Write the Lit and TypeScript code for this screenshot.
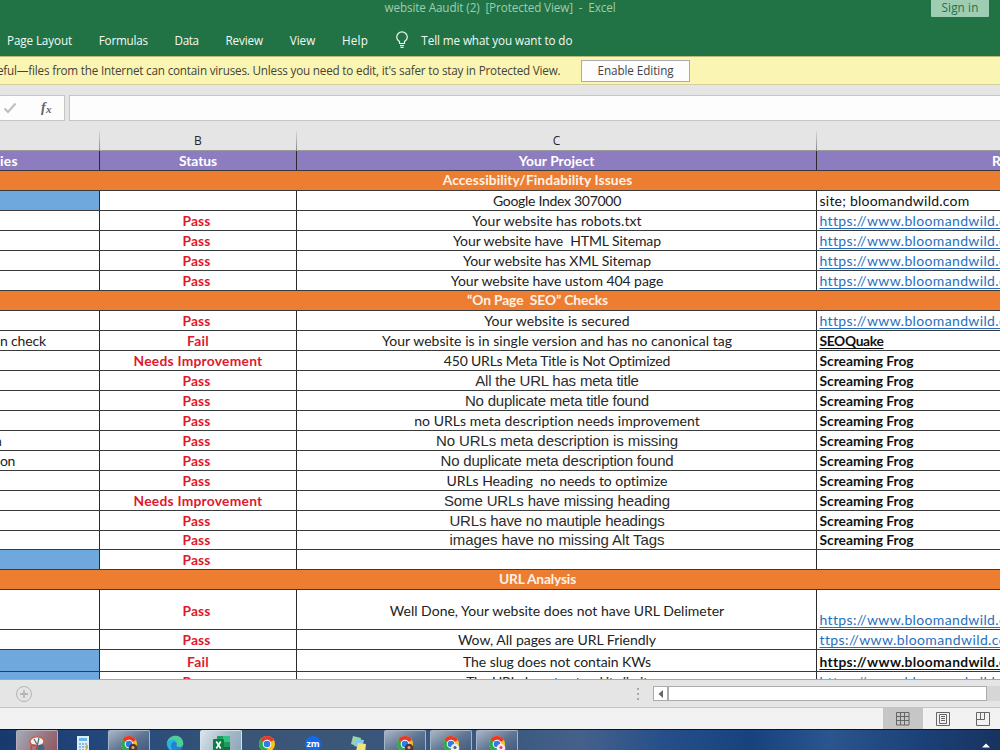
import { LitElement, html, css, svg, nothing } from "lit";
import { customElement } from "lit/decorators.js";
import { styleMap } from "lit/directives/style-map.js";

const FACES: Record<string, string> = {
  ui: '11.7px "Open Sans"',
  cal: '14px Lato',
  calb: 'bold 13.8px Lato',
  ari: '15px "Liberation Sans"',
};
const pen = document.createElement("canvas").getContext("2d")!;

/** Text tracked so that it takes up the given width. */
function fit(text: string, face: string, width: number, extra = "") {
  pen.font = FACES[face];
  const gap = (width - pen.measureText(text).width) / text.length;
  return html`<span class="t ${face} ${extra}" style=${styleMap({ letterSpacing: gap.toFixed(3) + "px" })}>${text}</span>`;
}

type Txt = [string, number];
interface Row {
  h: number;
  band?: Txt;
  a?: Txt;
  blue?: boolean;
  s?: "Pass" | "Fail" | "Needs Improvement";
  c?: Txt;
  arial?: boolean;
  d?: "link" | "ttps" | "blink" | "frog" | "quake" | "site";
  cls?: string;
}
const ROWS: Row[] = [
  { h: 20, band: ["Accessibility/Findability Issues", 190] },
  { h: 20, blue: true, c: ["Google Index 307000", 128], d: "site" },
  { h: 20, s: "Pass", c: ["Your website has robots.txt", 170], d: "link" },
  { h: 20, s: "Pass", c: ["Your website have \u00a0HTML Sitemap", 209], d: "link" },
  { h: 20, s: "Pass", c: ["Your website has XML Sitemap", 189], d: "link" },
  { h: 20, s: "Pass", c: ["Your website have ustom 404 page", 213], d: "link" },
  { h: 20, band: ["“On Page \u00a0SEO” Checks", 141] },
  { h: 20, s: "Pass", c: ["Your website is secured", 146], d: "link" },
  { h: 20, a: ["n check", 46], s: "Fail", c: ["Your website is in single version and has no canonical tag", 351], d: "quake" },
  { h: 20, s: "Needs Improvement", c: ["450 URLs Meta Title is Not Optimized", 227], d: "frog", cls: "needs" },
  { h: 20, s: "Pass", c: ["All the URL has meta title", 164], arial: true, d: "frog" },
  { h: 20, s: "Pass", c: ["No duplicate meta title found", 184], arial: true, d: "frog" },
  { h: 20, s: "Pass", c: ["no URLs meta description needs improvement", 286], d: "frog" },
  { h: 20, a: ["n", 8], s: "Pass", c: ["No URLs meta description is missing", 242], arial: true, d: "frog", cls: "cut" },
  { h: 20, a: ["on", 15], s: "Pass", c: ["No duplicate meta description found", 233], arial: true, d: "frog" },
  { h: 20, s: "Pass", c: ["URLs Heading \u00a0no needs to optimize", 221], d: "frog" },
  { h: 20, s: "Needs Improvement", c: ["Some URLs have missing heading", 226], arial: true, d: "frog", cls: "needs" },
  { h: 20, s: "Pass", c: ["URLs have no mautiple headings", 215], arial: true, d: "frog" },
  { h: 19, s: "Pass", c: ["images have no missing Alt Tags", 216], arial: true, d: "frog" },
  { h: 20, blue: true, s: "Pass" },
  { h: 20, band: ["URL Analysis", 78] },
  { h: 40, s: "Pass", c: ["Well Done, Your website does not have URL Delimeter", 336], d: "link", cls: "tall" },
  { h: 20, s: "Pass", c: ["Wow, All pages are URL Friendly", 199], d: "ttps" },
  { h: 22, blue: true, s: "Fail", c: ["The slug does not contain KWs", 188], d: "blink" },
  { h: 20, blue: true, s: "Pass", c: ["The URL do not extend its limit", 182], d: "link" },
];
const STATUS_W = { Pass: 28, Fail: 22, "Needs Improvement": 129 };

const linkCell = (d: Row["d"]) => {
  switch (d) {
    case "site": return fit("site; bloomandwild.com", "cal", 150);
    case "link": return fit("https://www.bloomandwild.com", "cal", 206, "link");
    case "ttps": return fit("ttps://www.bloomandwild.com", "cal", 199, "link");
    case "blink": return fit("https://www.bloomandwild.com", "calb", 206, "under");
    case "quake": return fit("SEOQuake", "calb", 64, "under");
    case "frog": return fit("Screaming Frog", "calb", 94);
    default: return nothing;
  }
};

const chrome = (badge?: string) => svg`
  <circle cx="11" cy="11" r="8" fill="#fbc116"/>
  <path d="M11 11 4.1 7A8 8 0 0 1 18 7Z" fill="#e33b2e"/>
  <path d="M11 11 4.1 7A8 8 0 0 0 10 19L13 13Z" fill="#2da94f"/>
  <circle cx="11" cy="11" r="4.3" fill="#fff"/><circle cx="11" cy="11" r="3.3" fill="#3479e8"/>
  ${badge ? svg`<circle cx="15" cy="15" r="4.3" fill=${badge}/><circle cx="15" cy="14.5" r="1.5" fill=${badge === "#53382f" ? "#e7a58a" : badge === "#e4ecf2" ? "#47627a" : "#e53b72"}/>` : nothing}`;

const APPS = [
  { on: "red", g: svg`<ellipse cx="11" cy="8.5" rx="7" ry="4.7" fill="#f5efe9" stroke="#c65a49" stroke-width="1.3"/><path d="m8 6 5 9m0-10-2 9" stroke="#526c80" stroke-width="1.2"/><circle cx="8" cy="15" r="3" fill="none" stroke="#c44" stroke-width="1.5"/><circle cx="15" cy="15" r="3.4" fill="#3a6b83"/>` },
  { g: svg`<path d="M5 3h12v18H5z" fill="#d9eefb"/><path d="M7 5h8v3H7z" fill="#6eb4e4"/><path d="M7 11h9m-9 3h9m-9 3h9" stroke="#7aa9cd" stroke-width="1.5" stroke-dasharray="2 1"/><path d="M14 12h2v4h-2z" fill="#e3a650"/>` },
  { on: "on", g: chrome("#53382f") },
  { g: svg`<circle cx="11" cy="11" r="8.3" fill="#1d83d4"/><path d="M3 10C5 1 18 0 19.3 10c.2 4-4 5-7 3 2-3-1-5-4-5-3 0-5 2-5.300 4Z" fill="#4fcf97"/><path d="M3 10c1-4 8-5 10-1-5-2-8 4-4 9-4-1-6-4-6-8Z" fill="#2bb2df"/>` },
  { on: "light", g: svg`<rect x="7" y="3" width="13" height="17" rx="1" fill="#1d9c5c"/><path d="M13 3h7v6h-7z" fill="#34c481"/><path d="M13 14h7v6h-7z" fill="#126f40"/><rect x="3" y="6" width="11" height="12" rx="1" fill="#107c41"/><path d="m6.300 8.500 4.400 7m0-7-4.400 7" stroke="#fff" stroke-width="1.600"/>` },
  { g: chrome() },
  { g: svg`<circle cx="11" cy="11" r="8" fill="#1468ea"/><text x="11" y="14" text-anchor="middle" font-family="Open Sans, sans-serif" font-size="9" font-weight="bold" fill="#fff">zm</text>` },
  { g: svg`<path d="m5 3 8 2-2 9-8-3Z" fill="#9bd3a4"/><path d="m8 6 8 1-2 8-8-2Z" fill="#86c9ee"/><path d="m10 10 8 1-1 9-9-2Z" fill="#f3e277"/>` },
  { on: "on", g: chrome("#53382f") },
  { on: "on", g: chrome("#e4ecf2") },
  { on: "on", g: chrome("#f3e7ec") },
];

@customElement("app-root")
export class AppRoot extends LitElement {
  static styles = css`
    :host { display: flex; flex-direction: column; width: 1000px; height: 750px; overflow: hidden; background: #e5e5e5; box-sizing: border-box; }
    * { box-sizing: border-box; }
    svg { display: block; flex: none; }
    .t { white-space: pre; display: block; flex: none; line-height: 18px; }
    .ui { font: 11.7px/18px "Open Sans", sans-serif; }
    .cal { font: 14px/18px Lato, sans-serif; }
    .calb { font: bold 13.8px/18px Lato, sans-serif; }
    .ari { font: 15px/18px "Liberation Sans", sans-serif; }
    .title { height: 26px; flex: none; background: #217346; display: grid; grid-template-columns: 384.5px 546.5px 58px; color: #9fcdb0; overflow: hidden; }
    .title > .t { grid-column: 2; margin-top: -2px; }
    .sign { height: 17px; background: #9fcdb3; color: #217346; display: flex; justify-content: center; border-radius: 0 0 1px 1px; }
    .sign .t { margin-top: -2px; }
    .tabs { height: 30px; flex: none; background: #217346; color: #f2faf5; display: flex; padding: 5px 0 0 7px; }
    .tabs .t { margin-right: 26.800px; }
    .tabs .bulb { margin: 0 12px 0 0.500px; }
    .warn { height: 29px; flex: none; background: #fbf5b4; border-top: 1px solid #b9bb76; border-bottom: 1px solid #d5d0a0; color: #454437; display: flex; align-items: center; }
    .warn > .t { margin: -1px 0 0 -3px; width: 584px; }
    .btn { width: 109px; height: 22px; border: 1px solid #ababab; background: #fdfdfd; display: flex; justify-content: center; align-items: center; color: #444; }
    .btn .t { margin-top: -1px; }
    .fbar { height: 46px; flex: none; padding-top: 10px; display: flex; gap: 4px; }
    .fx { width: 65px; height: 26px; background: #fdfdfd; border: 1px solid #c6c6c6; border-left: 0; display: flex; align-items: center; }
    .fin { flex: 1; height: 26px; background: #fdfdfd; border: 1px solid #c6c6c6; border-right: 0; }
    .cols { height: 20px; flex: none; border-bottom: 1px solid #999; color: #262626; }
    .grid4 { display: grid; grid-template-columns: 100px 197px 520px 183px; }
    .cols > div { display: flex; justify-content: center; border-right: 1px solid; border-image: linear-gradient(#dcdcdc, #858585) 1; }
    .cols > div:last-child { border: 0; }
    .cols .cal { font-family: "Open Sans"; font-size: 12px; margin-top: 1px; }
    .sheet { height: 528px; flex: none; background: #fff; overflow: hidden; }
    .row { border-bottom: 1px solid #3a3a3a; overflow: hidden; }
    .row > div { display: flex; align-items: flex-end; justify-content: center; border-right: 1px solid #2b2b2b; overflow: hidden; min-width: 0; height: 100%; color: #222; }
    .row > div:last-child { border-right: 0; justify-content: flex-start; padding-left: 2.500px; color: #111; }
    .row > div:first-child { justify-content: flex-start; }
    .row .s { color: #e0182d; padding-right: 3px; }
    .row.fail .s, .row.needs .s { padding-right: 0; }
    .row .t { margin-bottom: 0; }
    .row .c { padding-left: 1px; }
    .row .ari { color: #2d2d2d; }
    .row .link { color: #2a6fbd; text-decoration: underline; text-underline-offset: 2px; text-decoration-thickness: 1px; }
    .row .under { text-decoration: underline; text-underline-offset: 2px; text-decoration-thickness: 1px; }
    .row .blue { background: #6fa8dc; }
    .cut .t.first { margin-left: -6px; }
    .tall .s, .tall .c { align-items: center !important; }
    .tall .s .t, .tall .c .t { margin-top: 2px; margin-bottom: 0; }
    .head { height: 20px; background: #8e7cc0; }
    .row.head > div, .row.head > div:last-child { color: #fff; }
    .row.head > div:last-child { padding-left: 175px; }
    .band { background: #ed7d31; display: flex; padding-left: 296px; }
    .row.band > .bandbox { width: 483px; border: 0; justify-content: center; padding: 0; color: #fff3e8; }
    .row > .bandbox .t { margin-bottom: 1px; }
    .foot { height: 29px; flex: none; border-top: 1px solid #a6a6a6; border-bottom: 1px solid #c3c3c3; display: flex; align-items: center; }
    .plus { margin: 0 603.500px 0 15px; }
    .arrow { width: 15px; height: 15px; border: 1px solid #ababab; background: #fff; display: grid; place-items: center; margin-left: 13px; }
    .thumb { width: 319px; height: 15px; border: 1px solid #ababab; background: #fff; }
    .track { flex: 1; height: 15px; background: #d6d6d6; }
    .status { height: 21px; flex: none; background: #f2f2f2; display: flex; justify-content: flex-end; }
    .status > div { width: 40px; display: grid; place-items: center; }
    .status > .sel { background: #c6c6c6; }
    .status > .last { width: 37px; padding-left: 3px; }
    .task { height: 21px; flex: none; border-top: 1px solid #10151c; background: linear-gradient(90deg, #16396e 0, #254a7c 12%, #3a5576 24%, #3a587e 50%, #45618a 58%, #27508a 66%, #17427e 75%, #2b558e 83%, #1b4178 92%, #17335f 100%); display: flex; padding-left: 16px; gap: 4px; overflow: hidden; }
    .app { width: 42px; height: 26px; flex: none; display: flex; justify-content: center; padding-top: 2px; border: 1px solid transparent; border-bottom: 0; border-radius: 2px 2px 0 0; }
    .on { background: linear-gradient(150deg, #aab5c3, #5e7492 50%, #3b5377); border-color: #a5b5c8; }
    .red { background: linear-gradient(120deg, #a4adba, #97727c 60%, #8b5560); border-color: #b6aeb8; }
    .light { background: linear-gradient(120deg, #d9e5ea, #a8bdca 50%, #8ba3b9); border-color: #d5e0e8; }
    .up { margin: 13px 10px 0 auto; }
  `;

  private row(r: Row) {
    const style = styleMap({ height: r.h + "px" });
    if (r.band) return html`<div class="row band" style=${style}><div class="bandbox">${fit(r.band[0], "calb", r.band[1])}</div></div>`;
    return html`<div class="row grid4 ${r.cls ?? ""} ${r.s === "Fail" ? "fail" : ""}" style=${style}>
      <div class=${r.blue ? "blue" : ""}>${r.a ? fit(r.a[0], "cal", r.a[1], "first") : nothing}</div>
      <div class="s">${r.s ? fit(r.s, "calb", STATUS_W[r.s]) : nothing}</div>
      <div class="c">${r.c ? fit(r.c[0], r.arial ? "ari" : "cal", r.c[1]) : nothing}</div>
      <div>${linkCell(r.d)}</div>
    </div>`;
  }

  render() {
    return html`
      <div class="title">${fit("website Aaudit (2)  [Protected View]  -  Excel", "ui", 231)}<div class="sign">${fit("Sign in", "ui", 37)}</div></div>
      <div class="tabs">
        ${fit("Page Layout", "ui", 65)}${fit("Formulas", "ui", 49)}${fit("Data", "ui", 24)}${fit("Review", "ui", 37.5)}${fit("View", "ui", 25.5)}${fit("Help", "ui", 26)}
        <svg class="bulb" width="14" height="18" viewBox="0 0 14 18" fill="none" stroke="#eef8f1" stroke-width="1.200"><path d="M4.500 12.500v-2C2.800 9.300 1.700 8.200 1.700 6.200a5.300 5.300 0 0 1 10.600 0c0 2-1.100 3.100-2.800 4.300v2Zm.5 2.200h4M5.500 16.500h3"/></svg>
        ${fit("Tell me what you want to do", "ui", 151)}
      </div>
      <div class="warn">${fit("eful—files from the Internet can contain viruses. Unless you need to edit, it's safer to stay in Protected View.", "ui", 563.5)}<div class="btn">${fit("Enable Editing", "ui", 76)}</div></div>
      <div class="fbar">
        <div class="fx"><svg width="64" height="24" viewBox="0 0 64 24"><path d="m4.500 12.500 3.500 3.500 7.500-8.500" fill="none" stroke="#bdbdbd" stroke-width="2"/><text x="41" y="15.500" font-family="Liberation Serif, serif" font-style="italic" font-weight="bold" font-size="14" fill="#666">f</text><text x="46" y="16.500" font-family="Liberation Serif, serif" font-style="italic" font-weight="bold" font-size="11" fill="#666">x</text></svg></div>
        <div class="fin"></div>
      </div>
      <div class="cols grid4"><div></div><div><span class="t cal">B</span></div><div><span class="t cal">C</span></div><div></div></div>
      <div class="sheet">
        <div class="row head grid4"><div>${fit("ies", "calb", 18)}</div><div>${fit("Status", "calb", 38)}</div><div>${fit("Your Project", "calb", 76)}</div><div>${fit("Remarks", "calb", 54)}</div></div>
        ${ROWS.map((r) => this.row(r))}
      </div>
      <div class="foot">
        <svg class="plus" width="18" height="18" viewBox="0 0 18 18" fill="none" stroke="#b5b5b5"><circle cx="9" cy="9" r="7.500"/><path d="M9 5v8M5 9h8" stroke-width="1.800"/></svg>
        <svg width="3" height="14" viewBox="0 0 3 14" fill="#a9a9a9"><path d="M0 1h2v2H0zM0 6h2v2H0zM0 11h2v2H0z"/></svg>
        <div class="arrow"><svg width="5" height="8" viewBox="0 0 5 8"><path d="M5 0v8L.5 4Z" fill="#666"/></svg></div>
        <div class="thumb"></div><div class="track"></div>
      </div>
      <div class="status">
        <div class="sel"><svg width="14" height="14" viewBox="0 0 14 14" fill="none" stroke="#666"><path d="M.5.5h12.500v12.500H.5ZM4.500.5V13M8.500.5V13M.5 4.500H13M.5 8.500H13"/></svg></div>
        <div><svg width="14" height="14" viewBox="0 0 14 14" fill="none" stroke="#666"><path d="M.5.5h13v13H.5ZM3.500 2.500h7v9h-7ZM5 4.500h4M5 6.500h4M5 8.500h4"/></svg></div>
        <div class="last"><svg width="14" height="14" viewBox="0 0 14 14" fill="none" stroke="#666"><path d="M.5.5h13v13H.5ZM4.500.5v7M8.500.5v7M.5 7.500h8"/></svg></div>
      </div>
      <div class="task">
        ${APPS.map((a) => html`<div class="app ${a.on ?? ""}"><svg width="22" height="22" viewBox="0 0 22 22">${a.g}</svg></div>`)}
        <svg class="up" width="8" height="5" viewBox="0 0 8 5"><path d="M0 4.500 4 .5 8 4.500Z" fill="#fff"/></svg>
      </div>`;
  }
}
